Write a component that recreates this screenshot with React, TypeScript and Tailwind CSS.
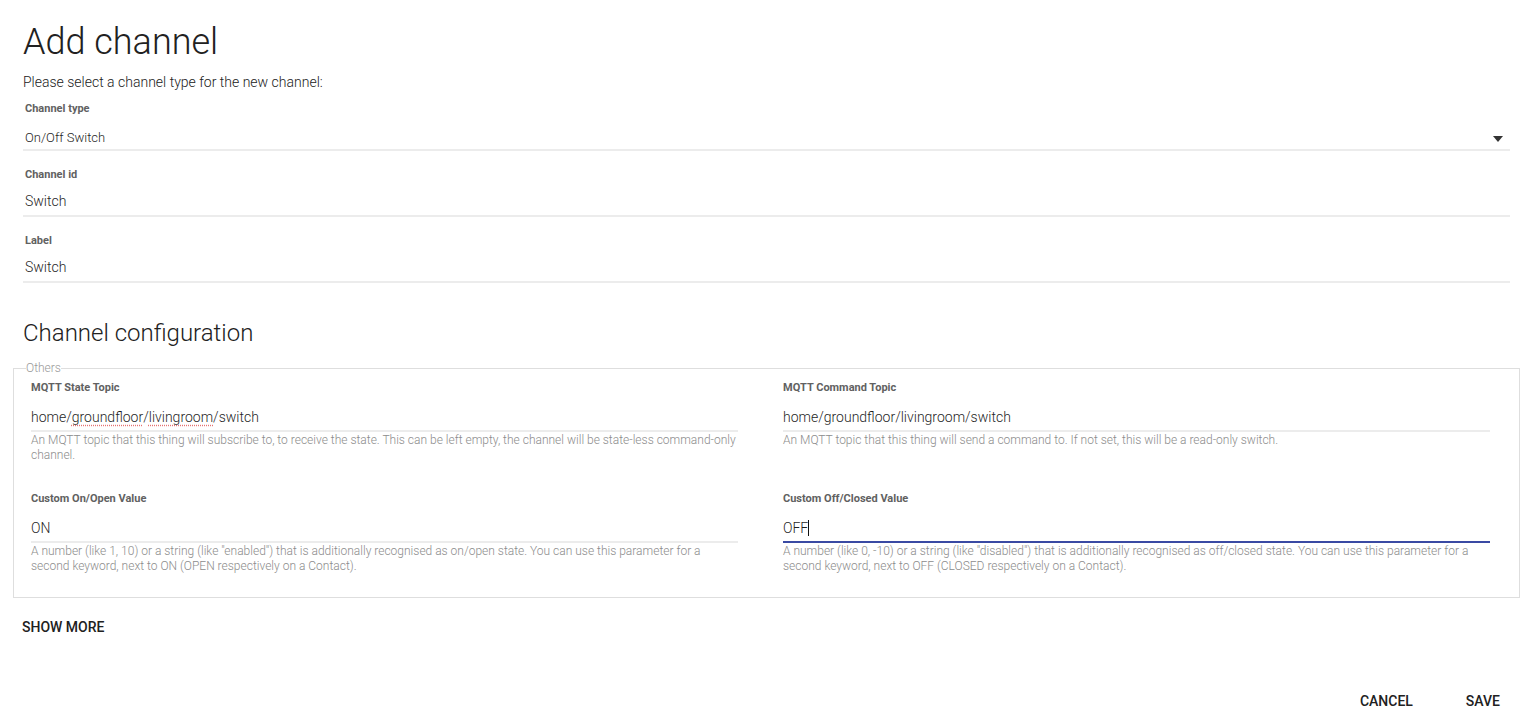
import React from 'react';

type FieldProps = {
  label: string;
  value: React.ReactNode;
  helper?: string;
  focused?: boolean;
};

const ConfigField: React.FC<FieldProps> = ({ label, value, helper, focused }) => (
  <div>
    <div className="h-4 text-[11px] leading-4 font-bold text-[#616161]">{label}</div>
    <div
      className={`h-[36px] box-border pt-[11px] text-[14px] leading-5 font-light text-[#1f1f1f] border-b-2 ${
        focused ? 'border-[#3a4aa3]' : 'border-[#ececec]'
      }`}
    >
      {value}
    </div>
    {helper && (
      <div className="pt-[1px] text-[12px] leading-[15px] font-light text-[#8c8c8c]">{helper}</div>
    )}
  </div>
);

const TopField: React.FC<{ label: string; value: string; small?: boolean; select?: boolean; first?: boolean }> = ({
  label,
  value,
  small,
  select,
  first,
}) => (
  <div className={first ? 'mt-[9px]' : 'mt-4'}>
    <div className="h-4 pl-[2px] text-[11px] leading-4 font-bold text-[#616161]">{label}</div>
    <div
      className={`h-[34px] box-border flex items-start justify-between border-b-2 border-[#ececec] text-[#1f1f1f] ${
        small ? 'pt-[11px] text-[13px] leading-5 font-light' : 'pt-2 text-[14px] leading-5 font-light'
      }`}
    >
      <span className="pl-[2px]">{value}</span>
      {select && (
        <svg width="10" height="6" viewBox="0 0 10 6" className="mt-[8px] mr-[7px]">
          <path d="M0 0 L10 0 L5 6 Z" fill="#333" />
        </svg>
      )}
    </div>
  </div>
);

const spell = 'underline decoration-dotted decoration-[#e57373] underline-offset-[3px]';

export default function App() {
  return (
    <div className="min-h-screen bg-white font-['Roboto','Liberation_Sans',sans-serif] pl-[23px] pr-[25px] pt-[20px] overflow-hidden">
      <h1 className="text-[36px] leading-[44px] font-light text-[#212121]">Add channel</h1>
      <p className="mt-2 text-[14px] leading-5 font-light text-[#212121]">
        Please select a channel type for the new channel:
      </p>

      <TopField first label="Channel type" value="On/Off Switch" small select />
      <TopField label="Channel id" value="Switch" />
      <TopField label="Label" value="Switch" />

      <h2 className="mt-[35px] text-[24px] leading-[30px] font-light text-[#212121]">Channel configuration</h2>

      <fieldset className="mt-[13px] -mx-[10px] border border-[#dedede] px-3 pt-[5px] pb-[23px]">
        <legend className="text-[12px] leading-[14px] font-light text-[#9a9a9a]">Others</legend>
        <div className="pl-[5px] pr-[17px] grid grid-cols-2 gap-x-[45px] gap-y-[28px]">
          <ConfigField
            label="MQTT State Topic"
            value={
              <span>
                home/<span className={spell}>groundfloor</span>/<span className={spell}>livingroom</span>/switch
              </span>
            }
            helper="An MQTT topic that this thing will subscribe to, to receive the state. This can be left empty, the channel will be state-less command-only channel."
          />
          <ConfigField
            label="MQTT Command Topic"
            value="home/groundfloor/livingroom/switch"
            helper="An MQTT topic that this thing will send a command to. If not set, this will be a read-only switch."
          />
          <ConfigField
            label="Custom On/Open Value"
            value="ON"
            helper={'A number (like 1, 10) or a string (like "enabled") that is additionally recognised as on/open state. You can use this parameter for a second keyword, next to ON (OPEN respectively on a Contact).'}
          />
          <ConfigField
            label="Custom Off/Closed Value"
            focused
            value={
              <span>
                OFF<span className="inline-block w-px h-[16px] bg-[#111] align-[-3px]" />
              </span>
            }
            helper={'A number (like 0, -10) or a string (like "disabled") that is additionally recognised as off/closed state. You can use this parameter for a second keyword, next to OFF (CLOSED respectively on a Contact).'}
          />
        </div>
      </fieldset>

      <button className="mt-[19px] -ml-px block text-[14px] leading-5 font-medium text-[#212121]">SHOW MORE</button>

      <div className="mt-[54px] flex justify-end gap-[53px] pr-[10px]">
        <button className="text-[14px] leading-5 font-medium text-[#212121]">CANCEL</button>
        <button className="text-[14px] leading-5 font-medium text-[#212121]">SAVE</button>
      </div>
    </div>
  );
}
